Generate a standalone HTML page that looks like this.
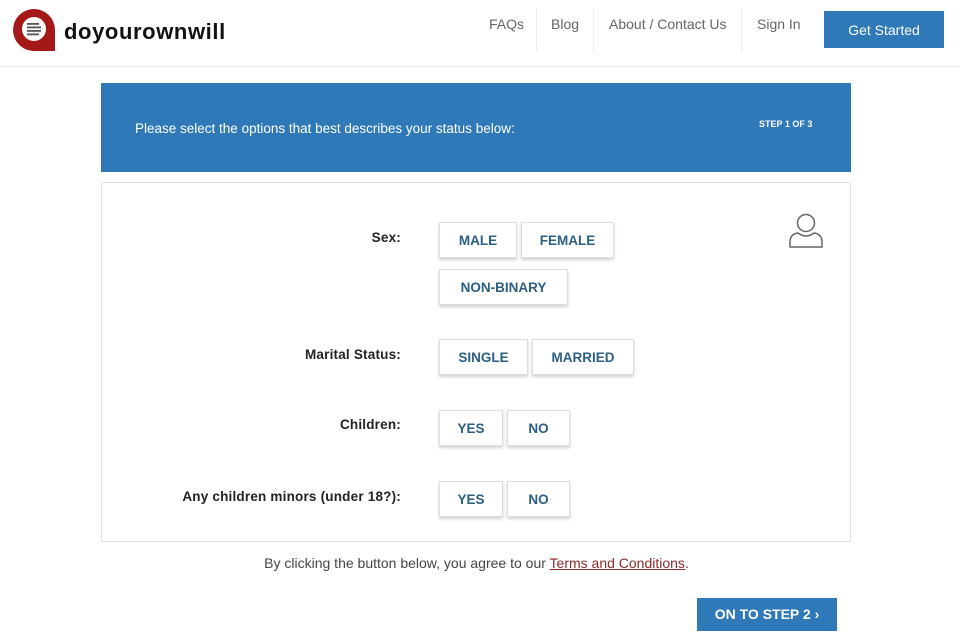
<!DOCTYPE html>
<html><head><style>
*{box-sizing:border-box;margin:0;padding:0}
body{width:960px;height:640px;background:#fff;font-family:"Liberation Sans",sans-serif;position:relative;overflow:hidden}
.hdr{position:absolute;left:0;top:0;width:960px;height:67px;border-bottom:1px solid #e6e6e6}
.nav a{position:absolute;top:16px;font-size:14px;color:#666;text-decoration:none}
.sep{position:absolute;top:8px;width:1px;height:44px;background:#eee}
.gs{position:absolute;left:824px;top:11px;width:120px;height:37px;background:#2f79b9;color:#fff;font-size:14px;text-align:center;line-height:38px}
.band{position:absolute;left:101px;top:83px;width:750px;height:89px;background:#2f79b9;color:#fff}
.card{position:absolute;left:101px;top:182px;width:750px;height:360px;border:1px solid #e2e2e2}
.lbl{position:absolute;font-size:13.5px;letter-spacing:.2px;font-weight:bold;color:#222;text-align:right;white-space:nowrap}
.btn{position:absolute;height:36px;border:1px solid #ddd;box-shadow:0 2px 3px rgba(0,0,0,.18);background:#fff;color:#2b5f84;font-weight:bold;font-size:13.5px;text-align:center;line-height:35px}
</style></head><body>
<div class="hdr">
<svg style="position:absolute;left:12px;top:8px" width="44" height="44" viewBox="0 0 44 44"><path d="M22 1A21 21 0 0 0 22 43H43V22A21 21 0 0 0 22 1Z" fill="#a51818"/><circle cx="22" cy="21" r="12" fill="#fff"/><rect x="15" y="15" width="12" height="1.8" fill="#555"/><rect x="15" y="18.5" width="14" height="1.8" fill="#555"/><rect x="15" y="22" width="14" height="1.8" fill="#555"/><rect x="15" y="25.5" width="12" height="1.8" fill="#555"/></svg>
<div style="position:absolute;left:64px;top:19px;font-size:22px;letter-spacing:.6px;font-weight:bold;color:#111">doyourownwill</div>
<div class="nav"><a style="left:489px">FAQs</a><div class="sep" style="left:536px"></div><a style="left:551px">Blog</a><div class="sep" style="left:593px"></div><a style="left:609px">About / Contact Us</a><div class="sep" style="left:741px"></div><a style="left:757px">Sign In</a></div>
<div class="gs">Get Started</div>
</div>
<div class="band"><div style="position:absolute;left:34px;top:38px;font-size:13.5px">Please select the options that best describes your status below:</div><div style="position:absolute;left:658px;top:36px;font-size:9px;font-weight:bold">STEP 1 OF 3</div></div>
<div class="card">
<svg style="position:absolute;left:686px;top:28px" width="36" height="38" viewBox="0 0 36 38" fill="none" stroke="#666" stroke-width="1.5"><circle cx="18" cy="12" r="8.5"/><path d="M2 36V31Q2 23 10 22Q14 25 18 25Q22 25 26 22Q34 23 34 31V36Z"/></svg>
</div>
<div class="lbl" style="top:230px;right:559px">Sex:</div>
<div class="btn" style="left:439px;top:222px;width:78px">MALE</div>
<div class="btn" style="left:521px;top:222px;width:93px">FEMALE</div>
<div class="btn" style="left:439px;top:269px;width:129px">NON-BINARY</div>
<div class="lbl" style="top:347px;right:559px">Marital Status:</div>
<div class="btn" style="left:439px;top:339px;width:89px">SINGLE</div>
<div class="btn" style="left:532px;top:339px;width:102px">MARRIED</div>
<div class="lbl" style="top:417px;right:559px">Children:</div>
<div class="btn" style="left:439px;top:410px;width:64px">YES</div>
<div class="btn" style="left:507px;top:410px;width:63px">NO</div>
<div class="lbl" style="top:489px;right:559px">Any children minors (under 18?):</div>
<div class="btn" style="left:439px;top:481px;width:64px">YES</div>
<div class="btn" style="left:507px;top:481px;width:63px">NO</div>
<div style="position:absolute;left:0;width:953px;top:555px;text-align:center;font-size:14px;color:#444">By clicking the button below, you agree to our <span style="color:#8b2b2b;text-decoration:underline">Terms and Conditions</span>.</div>
<div style="position:absolute;left:697px;top:598px;width:140px;height:33px;background:#2f79b9;color:#fff;font-weight:bold;font-size:14px;text-align:center;line-height:33px">ON TO STEP 2 ›</div>
</body></html>
